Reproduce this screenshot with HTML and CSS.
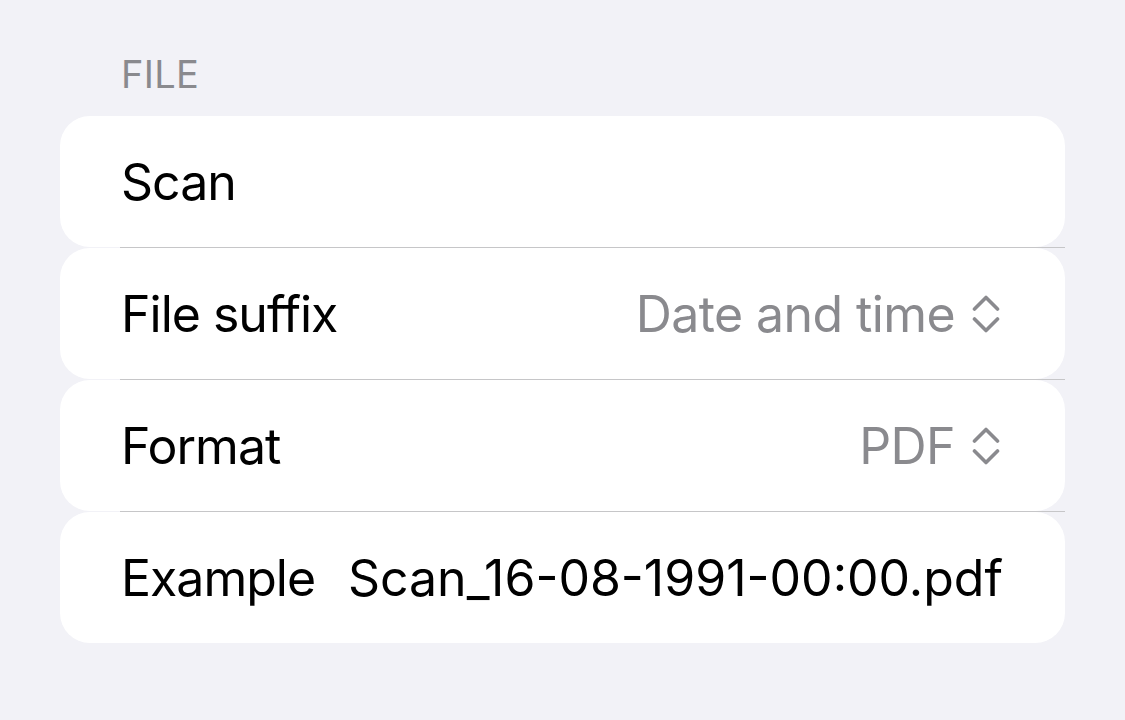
FILE: index.html
```html
<!DOCTYPE html>
<html>
<head>
<meta charset="utf-8">
<link rel="stylesheet" href="styles.css">
</head>
<body>
<div class="section">
  <div class="header">FILE</div>
  <div class="list">
    <div class="row"><span class="label">Scan</span></div>
    <div class="sep"></div>
    <div class="row">
      <span class="label">File suffix</span>
      <span class="picker"><span class="value">Date and time</span>
        <svg class="chev" width="28" height="38" viewBox="0 0 28 38"><path d="M2.5 14 L14 2.5 L25.5 14 M2.5 24 L14 35.5 L25.5 24" fill="none" stroke="#8a8a8e" stroke-width="3.6" stroke-linecap="round" stroke-linejoin="round"/></svg>
      </span>
    </div>
    <div class="sep"></div>
    <div class="row">
      <span class="label">Format</span>
      <span class="picker"><span class="value">PDF</span>
        <svg class="chev" width="28" height="38" viewBox="0 0 28 38"><path d="M2.5 14 L14 2.5 L25.5 14 M2.5 24 L14 35.5 L25.5 24" fill="none" stroke="#8a8a8e" stroke-width="3.6" stroke-linecap="round" stroke-linejoin="round"/></svg>
      </span>
    </div>
    <div class="sep"></div>
    <div class="row">
      <span class="label">Example</span>
      <span class="example">Scan_16-08-1991-00:00.pdf</span>
    </div>
  </div>
</div>
</body>
</html>
```
FILE: styles.css
```css
html, body {
  margin: 0;
  padding: 0;
  background: #f2f2f7;
}
body {
  font-family: Inter, "Liberation Sans", sans-serif;
  -webkit-font-smoothing: antialiased;
}
.section {
  padding: 51px 60px 0 60px;
}
.header {
  font-size: 38px;
  line-height: 46px;
  color: #8a8a8e;
  padding-left: 61px;
  margin-bottom: 19px;
  letter-spacing: 0.3px;
}
.list {
  display: flex;
  flex-direction: column;
}
.row {
  height: 131px;
  background: #fff;
  border-radius: 30px;
  display: flex;
  align-items: center;
  justify-content: space-between;
  padding: 0 62px 0 61px;
  font-size: 50px;
  letter-spacing: -0.6px;
  color: #000;
}
.label {
  letter-spacing: -1px;
}
.sep {
  height: 1px;
  background: #c6c6c8;
  margin-left: 60px;
}
.picker {
  display: flex;
  align-items: center;
  gap: 17px;
}
.value {
  color: #8a8a8e;
}
.example {
  letter-spacing: 0;
}
.chev {
  display: block;
  margin-right: 3px;
}
```
